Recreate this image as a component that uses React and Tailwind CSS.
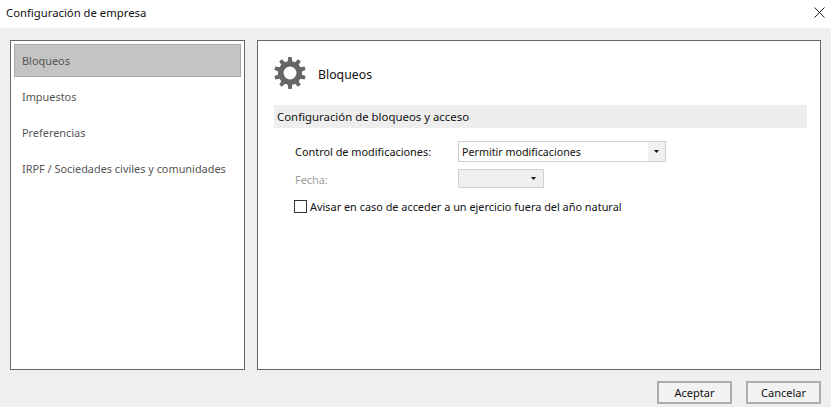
import React from 'react';

const menuItems = ['Bloqueos', 'Impuestos', 'Preferencias', 'IRPF / Sociedades civiles y comunidades'];

const gearPath = () => {
  const teeth = 10;
  const points = [];
  for (let i = 0; i < teeth; i++) {
    const a = (i / teeth) * Math.PI * 2 - Math.PI / 2;
    const step = (Math.PI * 2) / teeth;
    const pt = (r, offset) => `${(16 + r * Math.cos(a + offset)).toFixed(2)} ${(16 + r * Math.sin(a + offset)).toFixed(2)}`;
    points.push(pt(12, -step * 0.3), pt(16, -step * 0.17), pt(16, step * 0.17), pt(12, step * 0.3));
  }
  return `M${points.join('L')}Z M16 9.5a6.5 6.5 0 1 0 0 13a6.5 6.5 0 1 0 0 -13Z`;
};

const Arrow = () => (
  <svg width="5" height="3" viewBox="0 0 5 3" className="block">
    <path d="M0 0h5L2.5 3z" fill="#111" />
  </svg>
);

const Button = ({ children }) => (
  <button className="w-[75px] h-[23px] pt-[1px] bg-[#f2f2f2] border-2 border-[#adadad] text-[11px] text-[#111]">
    {children}
  </button>
);

export default function App() {
  return (
    <div className="w-[831px] h-[407px] flex flex-col bg-[#efefef] overflow-hidden text-[10.9px] text-[#222] font-['Noto_Sans','Open_Sans',sans-serif]">
      <div className="h-[28px] bg-white flex items-center justify-between pl-[6px] pr-[6px]">
        <span className="text-[11.3px] text-[#111] pb-[2px]">Configuración de empresa</span>
        <svg width="11" height="11" viewBox="0 0 11 11" className="mb-[4px]">
          <path d="M0.5 0.5L10.5 10.5M10.5 0.5L0.5 10.5" stroke="#222" strokeWidth="1" />
        </svg>
      </div>

      <div className="flex gap-[12px] px-[10px] pt-[12px]">
        <div className="w-[235px] h-[330px] bg-white border border-[#666] p-[3px]">
          {menuItems.map((item, i) => (
            <div
              key={item}
              className={`h-[33px] mb-[3px] pt-[2px] flex items-center pl-[7px] text-[#555] ${i === 0 ? 'bg-[#c4c4c4] border border-[#a8a8a8]' : 'border border-transparent'}`}
            >
              {item}
            </div>
          ))}
        </div>

        <div className="w-[564px] h-[330px] bg-white border border-[#666] pl-[16px] pr-[13px]">
          <div className="h-[64px] flex items-center gap-[12px]">
            <svg width="32" height="32" viewBox="0 0 32 32">
              <path d={gearPath()} fill="#666" fillRule="evenodd" />
            </svg>
            <span className="text-[12.3px] text-[#111] pt-[5px]">Bloqueos</span>
          </div>

          <div className="h-[23px] bg-[#eee] flex items-center pl-[3px] text-[11.4px] text-[#111]">
            Configuración de bloqueos y acceso
          </div>

          <div className="pl-[20px] pt-[13px]">
            <div className="flex items-center h-[21px]">
              <span className="w-[164px] text-[#111] pl-[1px] pt-[2px]">Control de modificaciones:</span>
              <div className="w-[208px] h-[21px] border border-[#d0d0d0] flex items-center justify-between">
                <span className="pl-[3px] pt-[2px] text-[10.7px] text-[#111]">Permitir modificaciones</span>
                <span className="w-[17px] h-full bg-[#f0f0f0] flex items-center justify-center"><Arrow /></span>
              </div>
            </div>

            <div className="flex items-center h-[19px] mt-[7px]">
              <span className="w-[164px] pl-[1px] pt-[4px] text-[#a0a0a0]">Fecha:</span>
              <div className="w-[86px] h-[19px] border border-[#d0d0d0] bg-[#efefef] flex items-center justify-end pr-[7px]">
                <Arrow />
              </div>
            </div>

            <div className="flex items-center h-[14px] mt-[11px] gap-[3px]">
              <span className="w-[13px] h-[13px] border border-[#333] bg-white" />
              <span className="text-[#111] pt-[3px]">Avisar en caso de acceder a un ejercicio fuera del año natural</span>
            </div>
          </div>
        </div>
      </div>

      <div className="flex justify-end gap-[14px] pr-[10px] pt-[11px]">
        <Button>Aceptar</Button>
        <Button>Cancelar</Button>
      </div>
    </div>
  );
}
